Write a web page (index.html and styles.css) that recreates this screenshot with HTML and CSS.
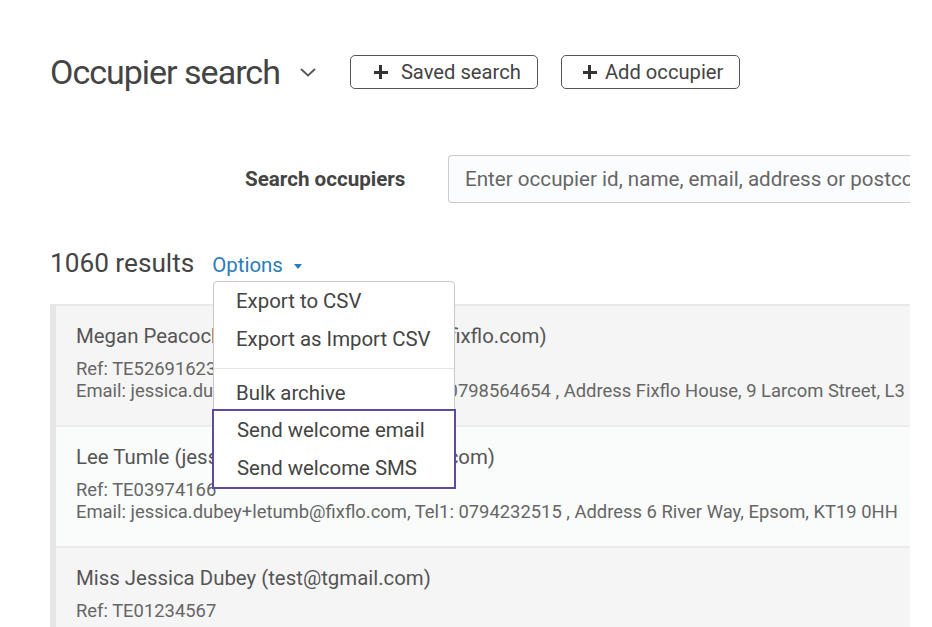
FILE: index.html
```html
<!DOCTYPE html>
<html>
<head>
<meta charset="utf-8">
<link rel="stylesheet" href="styles.css">
</head>
<body>
<div class="page">
  <header class="head">
    <h1 class="title">Occupier search</h1>
    <svg class="chev" width="18" height="12" viewBox="0 0 18 12"><path d="M2 3 L9 9.5 L16 3" fill="none" stroke="#555" stroke-width="1.8"/></svg>
    <button class="btn btn-saved"><span class="plus"></span><span>Saved search</span></button>
    <button class="btn btn-add"><span class="plus"></span><span>Add occupier</span></button>
  </header>

  <div class="search">
    <label class="search-label">Search occupiers</label>
    <div class="search-input">Enter occupier id, name, email, address or postcode</div>
  </div>

  <div class="results-bar">
    <span class="count">1060 results</span>
    <span class="options">Options <span class="caret"></span></span>
    <div class="menu">
      <div class="item">Export to CSV</div>
      <div class="item">Export as Import CSV</div>
      <div class="divider"></div>
      <div class="item">Bulk archive</div>
      <div class="highlight">
        <div class="item">Send welcome email</div>
        <div class="item">Send welcome SMS</div>
      </div>
    </div>
  </div>

  <div class="list">
    <div class="row odd">
      <div class="name">Megan Peacock (jessica.dubey+megan@fixflo.com)</div>
      <div class="meta">Ref: TE52691623</div>
      <div class="meta">Email: jessica.dubey+megan@fixflo.com, Tel: 0798564654 , Address Fixflo House, 9 Larcom Street, L3 5DW</div>
    </div>
    <div class="row even">
      <div class="name">Lee Tumle (jessica.dubey+letumb@fixflo.com)</div>
      <div class="meta">Ref: TE03974166</div>
      <div class="meta">Email: jessica.dubey+letumb@fixflo.com, Tel1: 0794232515 , Address 6 River Way, Epsom, KT19 0HH</div>
    </div>
    <div class="row odd">
      <div class="name">Miss Jessica Dubey (test@tgmail.com)</div>
      <div class="meta">Ref: TE01234567</div>
    </div>
  </div>
</div>
</body>
</html>
```

FILE: styles.css
```css
html, body {
  margin: 0;
  padding: 0;
  background: #fff;
}
.page {
  width: 860px;
  height: 627px;
  padding-left: 50px;
  overflow: hidden;
  font-family: Roboto, "Liberation Sans", sans-serif;
  color: #444;
}
.head {
  display: flex;
  align-items: center;
  height: 60px;
  margin-top: 42px;
}
.title {
  margin: 0;
  font-size: 34px;
  font-weight: 400;
  letter-spacing: -1px;
  color: #444;
}
.chev {
  margin-left: 19px;
  margin-right: 33px;
}
.btn {
  display: flex;
  align-items: center;
  box-sizing: border-box;
  height: 34px;
  border: 1.5px solid #555;
  border-radius: 5px;
  background: #fff;
  font-family: Roboto, "Liberation Sans", sans-serif;
  font-size: 20.2px;
  color: #444;
  padding: 0 16px 0 23px;
  margin-right: 23px;
  white-space: nowrap;
}
.btn-saved { width: 188px; }
.btn-add { width: 179px; padding: 0 14px 0 21px; }
.btn-saved .plus { margin-right: 13px; }
.btn-add .plus { margin-right: 8px; }
.plus {
  position: relative;
  width: 14px;
  height: 14px;
  flex: none;
  display: inline-block;
}
.plus::before, .plus::after {
  content: "";
  position: absolute;
  background: #333;
}
.plus::before { left: 0; top: 5.5px; width: 14px; height: 3px; }
.plus::after { top: 0; left: 5.5px; width: 3px; height: 14px; }

.search {
  display: flex;
  align-items: center;
  margin-top: 53px;
  margin-left: 195px;
}
.search-label {
  font-size: 20.6px;
  font-weight: 700;
  color: #444;
  width: 203px;
  flex: none;
}
.search-input {
  flex: 1;
  height: 46px;
  border: 1px solid #ccc;
  border-right: none;
  border-radius: 4px 0 0 4px;
  background: #fbfcfd;
  display: flex;
  align-items: center;
  padding-left: 16px;
  font-size: 20.6px;
  color: #666;
  white-space: nowrap;
  overflow: hidden;
}

.results-bar {
  position: relative;
  display: flex;
  align-items: baseline;
  margin-top: 45px;
  height: 38px;
}
.count {
  font-size: 26.2px;
  color: #444;
}
.options {
  margin-left: 18px;
  font-size: 20.4px;
  color: #2b7bbd;
}
.caret {
  display: inline-block;
  width: 0;
  height: 0;
  border-left: 4px solid transparent;
  border-right: 4px solid transparent;
  border-top: 5px solid #2b7bbd;
  vertical-align: middle;
  margin-left: 6px;
}
.menu {
  position: absolute;
  z-index: 2;
  left: 163px;
  top: 33px;
  width: 240px;
  background: #fff;
  border: 1px solid #c8c8c8;
  border-radius: 4px 4px 0 0;
}
.item {
  font-size: 20.4px;
  color: #444;
  line-height: 38px;
  padding-left: 22px;
  white-space: nowrap;
}
.item:nth-child(2) { line-height: 39px; }
.divider {
  height: 1px;
  background: #e5e5e5;
  margin: 9px 0 5px;
}
.highlight {
  margin: -3px -2px -1px -2px;
  border: 2px solid #5e4b9e;
}
.highlight .item { padding-left: 23px; line-height: 38px; }

.list {
  margin-top: 18px;
  border-left: 6px solid #e6e6e6;
  border-top: 2px solid #e8e8e8;
}
.row {
  box-sizing: border-box;
  height: 121px;
  border-bottom: 2px solid #ececec;
  padding: 18px 0 0 20px;
  white-space: nowrap;
}
.odd { background: #f5f5f5; }
.even { background: #fafbfb; }
.name {
  font-size: 20.4px;
  line-height: 24px;
  color: #555;
  margin-bottom: 10px;
}
.meta {
  font-size: 18.4px;
  color: #666;
  line-height: 22px;
}
```
